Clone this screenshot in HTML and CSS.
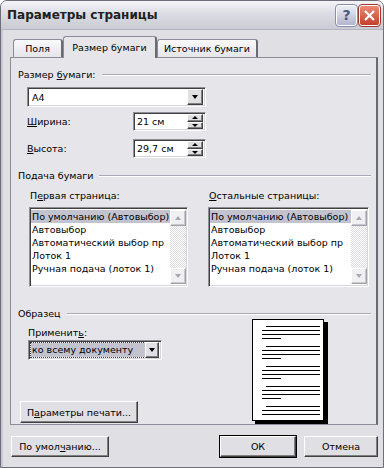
FILE: index.html
```html
<!DOCTYPE html>
<html lang="ru">
<head>
  <meta charset="UTF-8">
  <title>Параметры страницы</title>
  <link rel="stylesheet" href="styles.css">
</head>
<body>
  <div class="window">
    <div class="titlebar">
      <span class="title">Параметры страницы</span>
      <span class="tb-btn help">?</span>
      <span class="tb-btn close">
        <svg width="13" height="13" viewBox="0 0 13 13"><path d="M2 2 L11 11 M11 2 L2 11" stroke="#fff" stroke-width="2.2"/></svg>
      </span>
    </div>

    <div class="client">
      <div class="tabs">
        <div class="tab tab-fields">Поля</div>
        <div class="tab tab-size active">Размер бумаги</div>
        <div class="tab tab-source">Источник бумаги</div>
      </div>

      <div class="panel">
        <div class="group-title"><span>Размер <u>б</u>умаги:</span><i class="group-line"></i></div>
        <div class="combo combo-size">
          <span class="combo-text">А4</span>
          <span class="drop-btn"><i class="arrow-down"></i></span>
        </div>
        <div class="field-row row-width">
          <span class="field-label"><u>Ш</u>ирина:</span>
          <div class="spin">
            <span class="spin-text">21 см</span>
            <span class="spin-btns"><span class="spin-btn"><i class="arrow-up-sm"></i></span><span class="spin-btn"><i class="arrow-down-sm"></i></span></span>
          </div>
        </div>
        <div class="field-row row-height">
          <span class="field-label"><u>В</u>ысота:</span>
          <div class="spin">
            <span class="spin-text">29,7 см</span>
            <span class="spin-btns"><span class="spin-btn"><i class="arrow-up-sm"></i></span><span class="spin-btn"><i class="arrow-down-sm"></i></span></span>
          </div>
        </div>

        <div class="group-title group-feed"><span>Подача бумаги</span><i class="group-line"></i></div>
        <div class="lists">
          <div class="list-col first-col">
            <span class="list-label">П<u>е</u>рвая страница:</span>
            <div class="listbox">
              <ul class="items">
                <li class="sel">По умолчанию (Автовыбор)</li>
                <li>Автовыбор</li>
                <li>Автоматический выбор пр</li>
                <li>Лоток 1</li>
                <li>Ручная подача (лоток 1)</li>
              </ul>
              <div class="vscroll">
                <span class="sb-btn"><i class="arrow-up-gray"></i></span>
                <span class="sb-track"></span>
                <span class="sb-btn"><i class="arrow-down-gray"></i></span>
              </div>
            </div>
          </div>
          <div class="list-col other-col">
            <span class="list-label"><u>О</u>стальные страницы:</span>
            <div class="listbox">
              <ul class="items">
                <li class="sel">По умолчанию (Автовыбор)</li>
                <li>Автовыбор</li>
                <li>Автоматический выбор пр</li>
                <li>Лоток 1</li>
                <li>Ручная подача (лоток 1)</li>
              </ul>
              <div class="vscroll">
                <span class="sb-btn"><i class="arrow-up-gray"></i></span>
                <span class="sb-track"></span>
                <span class="sb-btn"><i class="arrow-down-gray"></i></span>
              </div>
            </div>
          </div>
        </div>

        <div class="group-title group-sample"><span>Образец</span><i class="group-line"></i></div>
        <div class="sample">
          <div class="sample-left">
            <span class="apply-label">Применит<u>ь</u>:</span>
            <div class="combo combo-apply">
              <span class="combo-text"><span class="focus-text">ко всему документу</span></span>
              <span class="drop-btn"><i class="arrow-down"></i></span>
            </div>
            <button class="btn btn-print">П<u>а</u>раметры печати...</button>
          </div>
          <svg class="preview" width="76" height="106" viewBox="0 0 76 106">
            <rect x="3" y="3" width="73" height="103" fill="#000"/>
            <rect x="0.5" y="0.5" width="71" height="101" fill="#fff" stroke="#000"/>
            <g stroke="#000" stroke-width="1">
              <path d="M14 7.5H68M10 11.5H68M10 15.5H68M10 19.5H29"/>
              <path d="M14 27.5H68M10 31.5H68M10 35.5H68M10 39.5H29"/>
              <path d="M14 47.5H68M10 51.5H68M10 55.5H68M10 59.5H29"/>
              <path d="M14 67.5H68M10 71.5H68M10 75.5H68M10 79.5H29"/>
              <path d="M14 87.5H68M10 91.5H68M10 95.5H68"/>
            </g>
          </svg>
        </div>
      </div>

      <div class="footer">
        <button class="btn btn-default">По умол<u>ч</u>анию...</button>
        <button class="btn btn-ok">ОК</button>
        <button class="btn btn-cancel">Отмена</button>
      </div>
    </div>
  </div>
</body>
</html>
```

FILE: styles.css
```css
* {
  box-sizing: border-box;
}
body {
  margin: 0;
  background: #fff;
  font-family: "DejaVu Sans", sans-serif;
  font-size: 9.5px;
  color: #000;
}
u {
  text-decoration: underline;
  text-underline-offset: 1px;
}
.window {
  width: 384px;
  height: 468px;
  display: flex;
  flex-direction: column;
  background: #e0dfe3;
  border: 1px solid #6e6e7a;
  border-radius: 7px 7px 0 0;
  overflow: hidden;
}
.titlebar {
  height: 29px;
  display: flex;
  align-items: center;
  gap: 2px;
  padding: 0 3px 0 6px;
  background: linear-gradient(#f4f4f8, #dcdce4 45%, #cacad4);
  border-bottom: 1px solid #b4b4be;
}
.title {
  font-weight: bold;
  font-size: 12px;
  color: #202020;
  margin-right: auto;
}
.tb-btn {
  width: 21px;
  height: 21px;
  border: 1px solid #fff;
  border-radius: 3px;
  display: flex;
  align-items: center;
  justify-content: center;
}
.help {
  background: linear-gradient(#eceef6, #b2b5cc);
  color: #50557a;
  font-weight: bold;
  font-size: 14px;
  outline: 1px solid #8a8ea8;
}
.close {
  background: linear-gradient(#ec8a74, #c3402b);
  outline: 1px solid #9a3a2c;
}
.client {
  flex: 1;
  display: flex;
  flex-direction: column;
  padding: 0 5px 0 7px;
  border-left: 2px solid #c8c8d0;
}
.tabs {
  display: flex;
  align-items: flex-end;
  height: 22px;
  margin-top: 6px;
  margin-bottom: -1px;
  padding-left: 3px;
}
.tab {
  height: 18px;
  margin-bottom: 1px;
  text-align: center;
  line-height: 17px;
  border: 1px solid #8c8c96;
  border-bottom: none;
  border-right: 2px solid #6a6a74;
  border-radius: 3px 3px 0 0;
  background: linear-gradient(#fafafc, #e4e4ea);
}
.tab-fields {
  width: 50px;
}
.tab-size {
  width: 94px;
}
.tab-source {
  width: 101px;
}
.tab.active {
  position: relative;
  z-index: 1;
  height: 22px;
  margin-bottom: 0;
  line-height: 21px;
  background: #e6e5ea;
}
.panel {
  height: 368px;
  padding: 10px 5px 0 7px;
  background: #e6e5ea;
  border: 1px solid #8c8c96;
  border-right: 2px solid #6a6a74;
  overflow: hidden;
}
.group-title {
  display: flex;
  align-items: center;
  gap: 6px;
  line-height: 13px;
}
.group-line {
  flex: 1;
  height: 2px;
  border-top: 1px solid #a8a8b2;
  border-bottom: 1px solid #fff;
}
.combo {
  display: flex;
  align-items: center;
  height: 20px;
  padding: 2px;
  background: #fff;
  border: 1px solid;
  border-color: #8e8e96 #fff #fff #8e8e96;
  box-shadow: inset 1px 1px #404040, inset -1px -1px #d8d6dc;
}
.combo-text {
  flex: 1;
  padding-left: 2px;
  white-space: nowrap;
}
.drop-btn, .spin-btn, .sb-btn {
  display: flex;
  align-items: center;
  justify-content: center;
  background: #e0dfe3;
  border: 1px solid;
  border-color: #fff #404040 #404040 #fff;
  box-shadow: inset -1px -1px #808080;
}
.drop-btn {
  width: 16px;
  height: 16px;
}
.arrow-down {
  border-left: 3.5px solid transparent;
  border-right: 3.5px solid transparent;
  border-top: 4px solid #000;
}
.combo-size {
  width: 179px;
  margin: 6px 0 0 9px;
}
.field-row {
  display: flex;
  align-items: center;
  margin-left: 9px;
}
.row-width {
  margin-top: 5px;
}
.row-height {
  margin-top: 8px;
}
.field-label {
  width: 106px;
}
.spin {
  display: flex;
  align-items: center;
  width: 73px;
  height: 19px;
  padding: 2px;
  background: #fff;
  border: 1px solid;
  border-color: #8e8e96 #fff #fff #8e8e96;
  box-shadow: inset 1px 1px #404040, inset -1px -1px #d8d6dc;
}
.spin-text {
  flex: 1;
  padding-left: 1px;
}
.spin-btns {
  display: flex;
  flex-direction: column;
  width: 16px;
  height: 15px;
}
.spin-btn {
  flex: 1;
}
.arrow-up-sm {
  border-left: 3px solid transparent;
  border-right: 3px solid transparent;
  border-bottom: 3px solid #000;
}
.arrow-down-sm {
  border-left: 3px solid transparent;
  border-right: 3px solid transparent;
  border-top: 3px solid #000;
}
.group-feed {
  margin-top: 11px;
}
.lists {
  display: flex;
  margin-top: 7px;
}
.list-col {
  display: flex;
  flex-direction: column;
}
.first-col {
  width: 159px;
  margin-left: 11px;
}
.other-col {
  width: 161px;
  margin-left: 20px;
}
.list-label {
  line-height: 13px;
  margin-left: 1px;
}
.listbox {
  display: flex;
  height: 80px;
  margin-top: 5px;
  padding: 2px 1px 2px 1px;
  background: #fff;
  border: 1px solid;
  border-color: #8e8e96 #fff #fff #8e8e96;
  box-shadow: inset 1px 1px #404040, inset -1px -1px #d8d6dc;
}
.items {
  flex: 1;
  margin: 0;
  padding: 0;
  list-style: none;
  overflow: hidden;
}
.items li {
  height: 13px;
  line-height: 13px;
  padding-left: 1px;
  white-space: nowrap;
  overflow: hidden;
}
.items li.sel {
  background: #c3c3d0;
}
.vscroll {
  display: flex;
  flex-direction: column;
  width: 16px;
}
.sb-btn {
  height: 16px;
  background: #f0f0f3;
  border-color: #fff #a0a0a8 #a0a0a8 #fff;
  box-shadow: inset -1px -1px #c8c8d0;
}
.sb-track {
  flex: 1;
  background: repeating-conic-gradient(#fff 0 25%, #dcdce2 0 50%) 0 0 / 2px 2px;
}
.arrow-up-gray {
  border-left: 3.5px solid transparent;
  border-right: 3.5px solid transparent;
  border-bottom: 4px solid #a8a8b4;
}
.arrow-down-gray {
  border-left: 3.5px solid transparent;
  border-right: 3.5px solid transparent;
  border-top: 4px solid #a8a8b4;
}
.group-sample {
  margin-top: 20px;
}
.sample {
  display: flex;
}
.sample-left {
  width: 234px;
  display: flex;
  flex-direction: column;
  align-items: flex-start;
}
.apply-label {
  line-height: 13px;
  margin: 6px 0 0 10px;
}
.combo-apply {
  width: 134px;
  margin: 1px 0 0 10px;
}
.focus-text {
  display: inline-block;
  width: 114px;
  margin-left: -2px;
  padding-left: 1px;
  line-height: 14px;
  background: #c3c3d0;
  outline: 1px dotted #404040;
}
.preview {
  margin-top: -1px;
}
.btn {
  height: 22px;
  padding: 0;
  font-family: "DejaVu Sans", sans-serif;
  font-size: 9.5px;
  color: #000;
  background: #e0dfe3;
  border: 1px solid;
  border-color: #fff #404040 #404040 #fff;
  box-shadow: inset -1px -1px #808080;
}
.btn-print {
  width: 118px;
  margin: 41px 0 0 2px;
}
.footer {
  display: flex;
  margin-top: 11px;
  padding-left: 1px;
}
.footer .btn {
  height: 21px;
}
.btn-default {
  width: 98px;
}
.btn-ok {
  width: 76px;
  margin-left: auto;
  outline: 1px solid #000;
}
.btn-cancel {
  width: 74px;
  margin-left: 8px;
}
```
